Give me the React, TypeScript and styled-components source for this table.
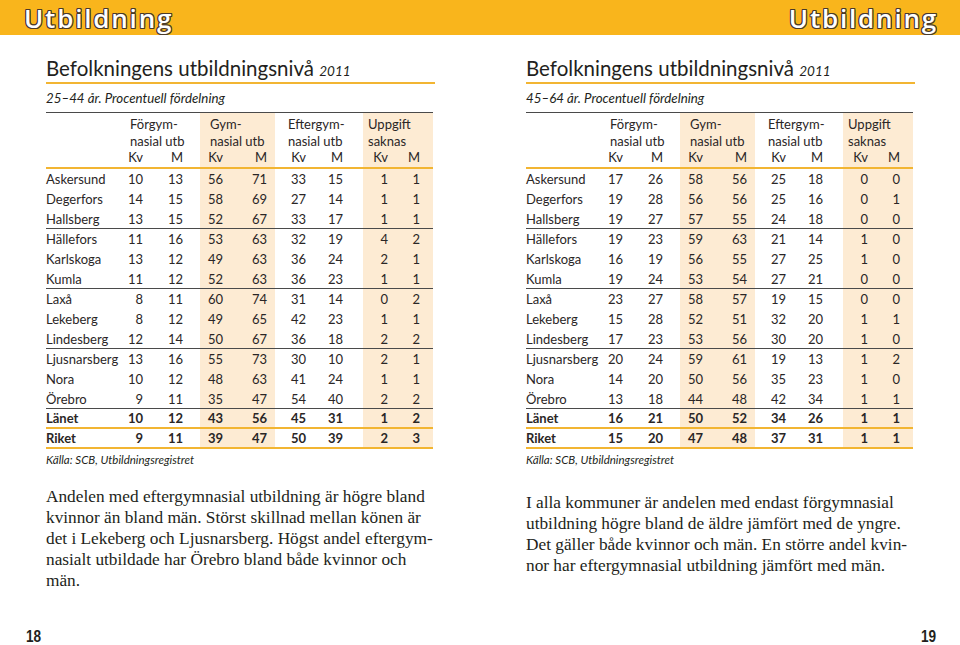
import React from "react";
import styled, { createGlobalStyle } from "styled-components";

const GlobalStyle = createGlobalStyle`
  html, body { margin: 0; padding: 0; background: #ffffff; }
  body { font-family: Lato, "Open Sans", sans-serif; color: #231f20; }
`;

const YELLOW = "#F9B51C";
const RULE_YELLOW = "#F2B532";
const SHADE = "#FDEBD3";
const GRID = "79px 35px 40px 38px 37px 45px 43px 37px 33px";

type Col = { pr: number; shade: boolean };
const cols: Col[] = [
  { pr: 17, shade: false },
  { pr: 17, shade: false },
  { pr: 15, shade: true },
  { pr: 8, shade: true },
  { pr: 14, shade: false },
  { pr: 20, shade: false },
  { pr: 12, shade: true },
  { pr: 13, shade: true },
];

const groups = [
  { lines: ["Förgym-", "nasial utb"], pl: 5, shade: false },
  { lines: ["Gym-", "nasial utb"], pl: 10, shade: true },
  { lines: ["Eftergym-", "nasial utb"], pl: 13, shade: false },
  { lines: ["Uppgift", "saknas"], pl: 5, shade: true },
];

type RowData = [string, ...number[]];

const leftRows: RowData[] = [
  ["Askersund", 10, 13, 56, 71, 33, 15, 1, 1],
  ["Degerfors", 14, 15, 58, 69, 27, 14, 1, 1],
  ["Hallsberg", 13, 15, 52, 67, 33, 17, 1, 1],
  ["Hällefors", 11, 16, 53, 63, 32, 19, 4, 2],
  ["Karlskoga", 13, 12, 49, 63, 36, 24, 2, 1],
  ["Kumla", 11, 12, 52, 63, 36, 23, 1, 1],
  ["Laxå", 8, 11, 60, 74, 31, 14, 0, 2],
  ["Lekeberg", 8, 12, 49, 65, 42, 23, 1, 1],
  ["Lindesberg", 12, 14, 50, 67, 36, 18, 2, 2],
  ["Ljusnarsberg", 13, 16, 55, 73, 30, 10, 2, 1],
  ["Nora", 10, 12, 48, 63, 41, 24, 1, 1],
  ["Örebro", 9, 11, 35, 47, 54, 40, 2, 2],
  ["Länet", 10, 12, 43, 56, 45, 31, 1, 2],
  ["Riket", 9, 11, 39, 47, 50, 39, 2, 3],
];

const rightRows: RowData[] = [
  ["Askersund", 17, 26, 58, 56, 25, 18, 0, 0],
  ["Degerfors", 19, 28, 56, 56, 25, 16, 0, 1],
  ["Hallsberg", 19, 27, 57, 55, 24, 18, 0, 0],
  ["Hällefors", 19, 23, 59, 63, 21, 14, 1, 0],
  ["Karlskoga", 16, 19, 56, 55, 27, 25, 1, 0],
  ["Kumla", 19, 24, 53, 54, 27, 21, 0, 0],
  ["Laxå", 23, 27, 58, 57, 19, 15, 0, 0],
  ["Lekeberg", 15, 28, 52, 51, 32, 20, 1, 1],
  ["Lindesberg", 17, 23, 53, 56, 30, 20, 1, 0],
  ["Ljusnarsberg", 20, 24, 59, 61, 19, 13, 1, 2],
  ["Nora", 14, 20, 50, 56, 35, 23, 1, 0],
  ["Örebro", 13, 18, 44, 48, 42, 34, 1, 1],
  ["Länet", 16, 21, 50, 52, 34, 26, 1, 1],
  ["Riket", 15, 20, 47, 48, 37, 31, 1, 1],
];

type Rule = "none" | "dark" | "yellow";
const ruleAfter = (i: number): Rule =>
  i === 12 || i === 13 ? "yellow" : [2, 5, 8, 11].includes(i) ? "dark" : "none";

const Spread = styled.div`
  display: flex;
  width: 960px;
  height: 645px;
  overflow: hidden;
`;

const Page = styled.section`
  width: 480px;
  height: 645px;
  display: flex;
  flex-direction: column;
`;

const Banner = styled.header<{ $side: "left" | "right" }>`
  height: 35px;
  background: ${YELLOW};
  display: flex;
  align-items: center;
  justify-content: ${(p) => (p.$side === "left" ? "flex-start" : "flex-end")};
  padding: ${(p) => (p.$side === "left" ? "0 0 0 24px" : "0 22px 0 0")};
  box-sizing: border-box;
`;

const BannerTitle = styled.h1`
  margin: 0;
  font-family: "Open Sans", Lato, sans-serif;
  font-weight: 600;
  font-size: 26px;
  line-height: 30px;
  letter-spacing: 1.8px;
  color: #ffffff;
  text-shadow:
    -1px -1px 0 #4a3a2a, 1px -1px 0 #4a3a2a, -1px 1px 0 #4a3a2a, 1px 1px 0 #4a3a2a,
    0 -1px 0 #4a3a2a, 0 1px 0 #4a3a2a, -1px 0 0 #4a3a2a, 1px 0 0 #4a3a2a;
`;

const Content = styled.div`
  padding-left: 46px;
  width: 389px;
  display: flex;
  flex-direction: column;
`;

const Title = styled.h2`
  margin: 22px 0 0 0;
  font-family: Lato, "Open Sans", sans-serif;
  font-weight: 400;
  font-size: 20.5px;
  line-height: 22px;
  padding-bottom: 0;
  border-bottom: 2px solid ${RULE_YELLOW};
  color: #231f20;
`;

const Year = styled.span`
  font-style: italic;
  font-size: 13.5px;
`;

const Subtitle = styled.p`
  margin: 6px 0 0 0;
  font-style: italic;
  font-size: 13.3px;
  line-height: 16px;
  color: #231f20;
`;

const Table = styled.div`
  margin-top: 6px;
  width: 387px;
  border-top: 1.5px solid #4a4a4a;
  display: flex;
  flex-direction: column;
  font-size: 13px;
  color: #2a2626;
`;

const HeadGrid = styled.div`
  display: grid;
  grid-template-columns: ${GRID};
  border-bottom: 2px solid ${RULE_YELLOW};
`;

const GroupLabel = styled.div<{ $pl: number; $shade: boolean }>`
  grid-column: span 2;
  grid-row: 1;
  padding: 3px 0 0 ${(p) => p.$pl}px;
  line-height: 16.5px;
  background: ${(p) => (p.$shade ? SHADE : "transparent")};
`;

const Corner = styled.div`
  grid-row: 1 / span 2;
`;

const SubHead = styled.div<{ $pr: number; $shade: boolean }>`
  grid-row: 2;
  text-align: right;
  padding: 0 ${(p) => p.$pr}px 2px 0;
  line-height: 16px;
  background: ${(p) => (p.$shade ? SHADE : "transparent")};
`;

const Row = styled.div<{ $rule: Rule; $bold: boolean }>`
  display: grid;
  grid-template-columns: ${GRID};
  height: 20px;
  box-sizing: border-box;
  font-weight: ${(p) => (p.$bold ? 700 : 400)};
  border-bottom: ${(p) =>
    p.$rule === "dark"
      ? "1px solid #4a4a4a"
      : p.$rule === "yellow"
      ? `2px solid ${RULE_YELLOW}`
      : "none"};
`;

const NameCell = styled.div`
  display: flex;
  align-items: center;
  white-space: nowrap;
`;

const NumCell = styled.div<{ $pr: number; $shade: boolean }>`
  display: flex;
  align-items: center;
  justify-content: flex-end;
  padding-right: ${(p) => p.$pr}px;
  background: ${(p) => (p.$shade ? SHADE : "transparent")};
`;

const Source = styled.p`
  margin: 4px 0 0 0;
  font-style: italic;
  font-size: 11.5px;
  line-height: 14px;
  color: #231f20;
`;

const Body = styled.p<{ $top: number }>`
  margin: ${(p) => p.$top}px 0 0 0;
  font-family: "Liberation Serif", "Times New Roman", serif;
  font-size: 17.3px;
  line-height: 21px;
  color: #231f20;
  white-space: nowrap;
`;

const Line = styled.span`
  display: block;
`;

const Footer = styled.footer<{ $side: "left" | "right" }>`
  margin-top: auto;
  display: flex;
  justify-content: ${(p) => (p.$side === "left" ? "flex-start" : "flex-end")};
  padding: ${(p) => (p.$side === "left" ? "0 0 0 24px" : "0 22px 0 0")};
`;

const PageNumber = styled.span`
  display: inline-block;
  font-family: "Liberation Sans", Arial, sans-serif;
  font-weight: 700;
  font-size: 17px;
  line-height: 16px;
  transform: scaleX(0.8);
  color: #231f20;
`;

const DataTable: React.FC<{ rows: RowData[] }> = ({ rows }) => (
  <Table>
    <HeadGrid>
      <Corner />
      {groups.map((g, i) => (
        <GroupLabel key={i} $pl={g.pl} $shade={g.shade}>
          {g.lines.map((l) => (
            <Line key={l}>{l}</Line>
          ))}
        </GroupLabel>
      ))}
      {cols.map((c, i) => (
        <SubHead key={i} $pr={c.pr} $shade={c.shade}>
          {i % 2 === 0 ? "Kv" : "M"}
        </SubHead>
      ))}
    </HeadGrid>
    {rows.map(([name, ...nums], i) => (
      <Row key={name} $rule={ruleAfter(i)} $bold={i >= 12}>
        <NameCell>{name}</NameCell>
        {nums.map((n, j) => (
          <NumCell key={j} $pr={cols[j].pr} $shade={cols[j].shade}>
            {n}
          </NumCell>
        ))}
      </Row>
    ))}
  </Table>
);

const App: React.FC = () => (
  <>
    <GlobalStyle />
    <Spread>
      <Page>
        <Banner $side="left">
          <BannerTitle>Utbildning</BannerTitle>
        </Banner>
        <Content>
          <Title>
            Befolkningens utbildningsnivå <Year>2011</Year>
          </Title>
          <Subtitle>25–44 år. Procentuell fördelning</Subtitle>
          <DataTable rows={leftRows} />
          <Source>Källa: SCB, Utbildningsregistret</Source>
          <Body $top={19}>
            <Line>Andelen med eftergymnasial utbildning är högre bland</Line>
            <Line>kvinnor än bland män. Störst skillnad mellan könen är</Line>
            <Line>det i Lekeberg och Ljusnarsberg. Högst andel eftergym-</Line>
            <Line>nasialt utbildade har Örebro bland både kvinnor och</Line>
            <Line>män.</Line>
          </Body>
        </Content>
        <Footer $side="left">
          <PageNumber>18</PageNumber>
        </Footer>
      </Page>
      <Page>
        <Banner $side="right">
          <BannerTitle>Utbildning</BannerTitle>
        </Banner>
        <Content>
          <Title>
            Befolkningens utbildningsnivå <Year>2011</Year>
          </Title>
          <Subtitle>45–64 år. Procentuell fördelning</Subtitle>
          <DataTable rows={rightRows} />
          <Source>Källa: SCB, Utbildningsregistret</Source>
          <Body $top={25}>
            <Line>I alla kommuner är andelen med endast förgymnasial</Line>
            <Line>utbildning högre bland de äldre jämfört med de yngre.</Line>
            <Line>Det gäller både kvinnor och män. En större andel kvin-</Line>
            <Line>nor har eftergymnasial utbildning jämfört med män.</Line>
          </Body>
        </Content>
        <Footer $side="right">
          <PageNumber>19</PageNumber>
        </Footer>
      </Page>
    </Spread>
  </>
);

export default App;
